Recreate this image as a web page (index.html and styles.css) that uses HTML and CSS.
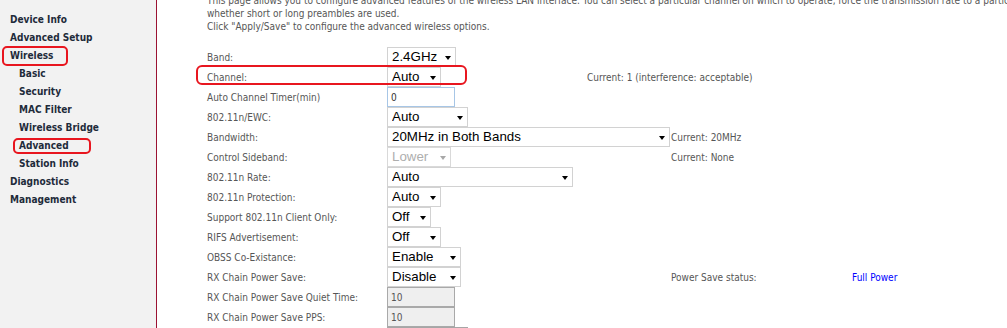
FILE: index.html
```html
<!DOCTYPE html>
<html>
<head>
<meta charset="utf-8">
<title>Wireless -- Advanced Settings</title>
<link rel="stylesheet" href="styles.css">
</head>
<body>
<div class="page">
  <nav class="side">
    <a class="nav">Device Info</a>
    <a class="nav">Advanced Setup</a>
    <a class="nav">Wireless</a>
    <a class="nav sub">Basic</a>
    <a class="nav sub">Security</a>
    <a class="nav sub">MAC Filter</a>
    <a class="nav sub">Wireless Bridge</a>
    <a class="nav sub">Advanced</a>
    <a class="nav sub">Station Info</a>
    <a class="nav">Diagnostics</a>
    <a class="nav">Management</a>
  </nav>
  <main class="content">
    <p class="desc"><span class="l1">This page allows you to configure advanced features of the wireless LAN interface. You can select a particular channel on which to operate, force the transmission rate to a particular speed, set the fragmentation threshold, set the RTS threshold, set the wakeup interval for clients in power-save mode, set the beacon interval for the access point, set XPress mode and set</span><br>whether short or long preambles are used.<br>Click "Apply/Save" to configure the advanced wireless options.</p>
    <div class="form">
      <div class="row"><span class="lbl">Band:</span><span class="ctl"><span class="sel"><select class="w69"><option>2.4GHz</option></select></span></span></div>
      <div class="row"><span class="lbl">Channel:</span><span class="ctl c200"><span class="sel"><select class="w54"><option>Auto</option></select></span></span><span class="info">Current: 1 (interference: acceptable)</span></div>
      <div class="row"><span class="lbl">Auto Channel Timer(min)</span><span class="ctl"><input class="txt" type="text" value="0"></span></div>
      <div class="row"><span class="lbl">802.11n/EWC:</span><span class="ctl"><span class="sel"><select class="w81"><option>Auto</option></select></span></span></div>
      <div class="row"><span class="lbl">Bandwidth:</span><span class="ctl c284"><span class="sel"><select class="w283"><option>20MHz in Both Bands</option></select></span></span><span class="info">Current: 20MHz</span></div>
      <div class="row"><span class="lbl">Control Sideband:</span><span class="ctl c284"><span class="sel dis"><select class="w64" disabled><option>Lower</option></select></span></span><span class="info">Current: None</span></div>
      <div class="row"><span class="lbl">802.11n Rate:</span><span class="ctl"><span class="sel"><select class="w186"><option>Auto</option></select></span></span></div>
      <div class="row"><span class="lbl">802.11n Protection:</span><span class="ctl"><span class="sel"><select class="w54"><option>Auto</option></select></span></span></div>
      <div class="row"><span class="lbl">Support 802.11n Client Only:</span><span class="ctl"><span class="sel"><select class="w44"><option>Off</option></select></span></span></div>
      <div class="row"><span class="lbl">RIFS Advertisement:</span><span class="ctl"><span class="sel"><select class="w54"><option>Off</option></select></span></span></div>
      <div class="row"><span class="lbl">OBSS Co-Existance:</span><span class="ctl"><span class="sel"><select class="w74"><option>Enable</option></select></span></span></div>
      <div class="row"><span class="lbl">RX Chain Power Save:</span><span class="ctl c284"><span class="sel"><select class="w74"><option>Disable</option></select></span></span><span class="info c181">Power Save status:</span><span class="link">Full Power</span></div>
      <div class="row"><span class="lbl">RX Chain Power Save Quiet Time:</span><span class="ctl"><input class="txt ro" type="text" value="10" disabled></span></div>
      <div class="row"><span class="lbl">RX Chain Power Save PPS:</span><span class="ctl"><input class="txt ro" type="text" value="10" disabled></span></div>
      <div class="row"><span class="lbl"></span><span class="ctl"><span class="sel"><select class="w81 dk" aria-label="Rate"><option></option></select></span></span></div>
    </div>
  </main>
  <div class="mark mark-wireless"></div>
  <div class="mark mark-advanced"></div>
  <div class="mark mark-channel"></div>
</div>
</body>
</html>
```

FILE: styles.css
```css
html, body {
  margin: 0;
  padding: 0;
  background: #fff;
  overflow: hidden;
}

.page {
  position: relative;
  display: flex;
  width: 1007px;
  height: 328px;
  overflow: hidden;
}

.side {
  flex: none;
  width: 157px;
  height: 100%;
  background: #f2f2f2;
  border-right: 1px solid #9b1232;
  display: flex;
  flex-direction: column;
  padding-top: 11px;
  box-sizing: border-box;
}

.nav {
  display: block;
  height: 18px;
  line-height: 18px;
  padding-left: 10px;
  font-family: "DejaVu Sans Condensed", "Liberation Sans", sans-serif;
  font-size: 10px;
  font-weight: bold;
  color: #1e2b3a;
  white-space: nowrap;
}

.nav.sub {
  padding-left: 19px;
}

.content {
  flex: 1;
  min-width: 0;
  padding-left: 50px;
  font-family: "DejaVu Sans Condensed", "Liberation Sans", sans-serif;
  font-size: 10px;
  color: #565656;
}

.desc {
  margin: -6px 0 0 0;
  line-height: 13px;
  white-space: nowrap;
}

.form {
  margin-top: 14px;
  display: flex;
  flex-direction: column;
}

.row {
  display: flex;
  align-items: center;
  height: 20px;
  white-space: nowrap;
}

.lbl {
  flex: none;
  width: 180px;
}

.ctl {
  flex: none;
  display: flex;
  align-items: center;
}

.c200 { width: 200px; }
.c284 { width: 284px; }
.c181 { width: 181px; }

.info {
  flex: none;
}

.link {
  color: #0000ff;
}

.sel {
  position: relative;
  display: inline-block;
  height: 20px;
}

.sel::after {
  content: "";
  position: absolute;
  right: 5px;
  top: 9px;
  border-left: 3.5px solid transparent;
  border-right: 3.5px solid transparent;
  border-top: 4px solid #000;
  pointer-events: none;
}

.sel.dis::after {
  border-top-color: #a8a8a8;
}

select {
  -webkit-appearance: none;
  appearance: none;
  box-sizing: border-box;
  height: 20px;
  margin: 0;
  padding: 0 0 0 4px;
  border: 1px solid #d2d2d2;
  border-radius: 0;
  background: #fff;
  color: #000;
  font-family: "Liberation Sans", Arial, sans-serif;
  font-size: 13.33px;
  line-height: 18px;
  outline: none;
}

select:disabled {
  color: #8c8c8c;
  border-color: #c9c9c9;
  background: #fff;
}

select.dk {
  border-color: #a6a6a6;
}

.w44 { width: 44px; }
.w54 { width: 54px; }
.w64 { width: 64px; }
.w69 { width: 69px; }
.w74 { width: 74px; }
.w81 { width: 81px; }
.w186 { width: 186px; }
.w283 { width: 283px; }

.txt {
  box-sizing: border-box;
  width: 68px;
  height: 20px;
  margin: 0;
  padding: 0 0 0 3px;
  border: 1px solid #a7c6e6;
  background: #fff;
  color: #333;
  font-family: "DejaVu Sans Condensed", "Liberation Sans", sans-serif;
  font-size: 10px;
  outline: none;
}

.txt.ro {
  border-color: #a9a9a9;
  background: #efefef;
  color: #555;
}

.mark {
  position: absolute;
  box-sizing: border-box;
  border: 2.5px solid #e8161f;
  border-radius: 5px;
  pointer-events: none;
}

.mark-wireless {
  left: 2px;
  top: 46px;
  width: 66px;
  height: 20px;
}

.mark-advanced {
  left: 13px;
  top: 138px;
  width: 78px;
  height: 16px;
  border-width: 2px;
}

.mark-channel {
  left: 196px;
  top: 65px;
  width: 271px;
  height: 20px;
  border-radius: 6px;
}
```
